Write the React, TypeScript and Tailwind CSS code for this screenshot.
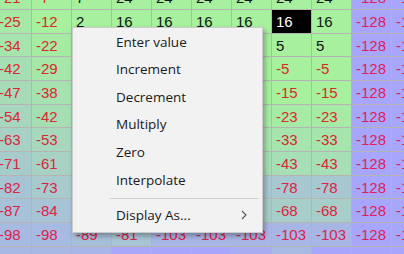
import React from 'react';

// table values, top row is cut off by the window edge
const grid: number[][] = [
  [-21, -7, 7, 24, 24, 24, 24, 24, 24, -128, -128],
  [-25, -12, 2, 16, 16, 16, 16, 16, 16, -128, -128],
  [-34, -22, -10, 5, 5, 5, 5, 5, 5, -128, -128],
  [-42, -29, -18, -5, -5, -5, -5, -5, -5, -128, -128],
  [-47, -38, -28, -15, -15, -15, -15, -15, -15, -128, -128],
  [-54, -42, -35, -23, -23, -23, -23, -23, -23, -128, -128],
  [-63, -53, -45, -33, -33, -33, -33, -33, -33, -128, -128],
  [-71, -61, -55, -43, -43, -43, -43, -43, -43, -128, -128],
  [-82, -73, -70, -78, -78, -78, -78, -78, -78, -128, -128],
  [-87, -84, -80, -68, -68, -68, -68, -68, -68, -128, -128],
  [-98, -98, -89, -81, -103, -103, -103, -103, -103, -128, -128],
  [-101, -101, -105, -127, -128, -128, -117, -98, -128, -128, -128],
];

const rowHeights = [
  'h-[24px]', 'h-[24px]', 'h-[23px]', 'h-[24px]', 'h-[24px]', 'h-[23px]',
  'h-[24px]', 'h-[24px]', 'h-[23px]', 'h-[24px]', 'h-[24px]', 'h-[24px]',
];

const menuItems = ['Enter value', 'Increment', 'Decrement', 'Multiply', 'Zero', 'Interpolate'];

const lerp = (a: number, b: number, t: number) => Math.round(a + (b - a) * t);
const amount = (v: number) => Math.min(1, Math.max(0, (-15 - v) / 113));

const cellBg = (v: number) => {
  const t = amount(v);
  return `rgb(${lerp(166, 168, t)},${lerp(240, 166, t)},${lerp(158, 250, t)})`;
};

const cellFg = (v: number) => {
  if (v >= 0) return '#141414';
  const t = Math.min(1, -v / 128);
  return `rgb(${lerp(212, 222, t)},${lerp(46, 30, t)},${lerp(30, 92, t)})`;
};

const Cell: React.FC<{ value: number; selected: boolean; first: boolean }> = ({ value, selected, first }) => (
  <div
    className={`w-[40px] h-full shrink-0 flex items-center border-r border-[#b4b4b4] ${first ? 'pl-[7px]' : 'pl-[4px]'} ${selected ? 'bg-black text-white' : ''}`}
    style={selected ? undefined : { backgroundColor: cellBg(value), color: cellFg(value) }}
  >
    {value}
  </div>
);

export default function App() {
  return (
    <div className="relative w-[404px] h-[254px] overflow-hidden bg-[#a8a6f8]">
      {/* Table */}
      <div className="-ml-[8px] -mt-[14px] w-[440px] text-[15px] leading-none font-['Liberation_Sans',Arial,sans-serif]">
        {grid.map((row, r) => (
          <div key={r} className={`flex border-b border-[#b4b4b4] ${rowHeights[r]}`}>
            {row.map((v, c) => (
              <Cell key={c} value={v} selected={r === 1 && c === 7} first={c === 0} />
            ))}
          </div>
        ))}
      </div>

      {/* Context menu */}
      <div className="absolute left-[72px] top-[27px] w-[191px] h-[206px] bg-[#f2f2f2] border border-[#cccccc] shadow-[2px_3px_5px_rgba(0,0,0,0.3)] font-['Open_Sans',sans-serif] text-[13.5px] text-[#1a1a1a]">
        <div className="flex flex-col">
          {menuItems.map((item) => (
            <div key={item} className="h-[27.6px] flex items-center pl-[43px]">
              {item}
            </div>
          ))}
          <div className="h-px bg-[#cfcfcf] ml-[37px] mr-[3px] mt-[4px] mb-[3px]" />
          <div className="h-[27.6px] flex items-center pl-[43px] pr-[15px]">
            <span>Display As...</span>
            <svg className="ml-auto" width="6" height="10" viewBox="0 0 6 10">
              <polyline points="1,1 5,5 1,9" fill="none" stroke="#555" strokeWidth="1.1" />
            </svg>
          </div>
        </div>
      </div>
    </div>
  );
}
